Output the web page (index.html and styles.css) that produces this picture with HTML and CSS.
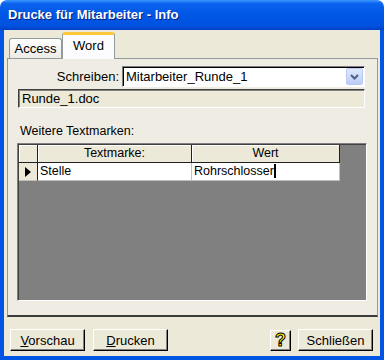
FILE: index.html
```html
<!DOCTYPE html>
<html lang="de">
<head>
    <meta charset="UTF-8">
    <title>Drucke für Mitarbeiter - Info</title>
    <link rel="stylesheet" href="styles.css">
</head>
<body>
    <div class="window">
        <div class="titlebar">Drucke für Mitarbeiter - Info</div>
        <div class="frame">

            <div class="tabs">
                <div class="tab">Access</div>
                <div class="tab active">Word</div>
            </div>

            <div class="pane">
                <div class="field-row">
                    <label class="field-label">Schreiben:</label>
                    <div class="combo">
                        <span class="combo-text">Mitarbeiter_Runde_1</span>
                        <span class="combo-btn">
                            <svg width="9" height="6" viewBox="0 0 9 6">
                                <path d="M1 1 L4.5 4.5 L8 1" fill="none" stroke="#4d6185" stroke-width="2"/>
                            </svg>
                        </span>
                    </div>
                </div>

                <div class="readonly">Runde_1.doc</div>

                <div class="section-label">Weitere Textmarken:</div>

                <div class="grid">
                    <div class="grid-row head">
                        <div class="cell sel"></div>
                        <div class="cell">Textmarke:</div>
                        <div class="cell">Wert</div>
                    </div>
                    <div class="grid-row data">
                        <div class="cell sel"><span class="pointer"></span></div>
                        <div class="cell">Stelle</div>
                        <div class="cell">Rohrschlosser<span class="caret"></span></div>
                    </div>
                </div>
            </div>

            <div class="buttons">
                <button class="btn"><u>V</u>orschau</button>
                <button class="btn"><u>D</u>rucken</button>
                <span class="spacer"></span>
                <button class="btn help"><span class="qmark">?</span></button>
                <button class="btn">Schließen</button>
            </div>

        </div>
    </div>
</body>
</html>
```

FILE: styles.css
```css
body {
    margin: 0;
    background: #fff;
    font-family: "Liberation Sans", Arial, sans-serif;
    font-size: 12.5px;
    color: #000;
}

.window {
    width: 384px;
    height: 360px;
    display: flex;
    flex-direction: column;
}

.titlebar {
    height: 30px;
    line-height: 29px;
    padding-left: 8px;
    border-radius: 7px 7px 0 0;
    background: linear-gradient(to bottom, #3d95ff 0%, #0a62ee 12%, #0058e6 45%, #0052e0 85%, #0040c8 100%);
    color: #fff;
    font-family: "Liberation Sans", Arial, sans-serif;
    font-weight: bold;
    font-size: 13px;
    text-shadow: 1px 1px #0a1e7a;
}

.frame {
    flex: 1;
    background: #ece9d8;
    border: 4px solid #0055e5;
    border-top: 0;
    display: flex;
    flex-direction: column;
}

.tabs {
    display: flex;
    align-items: flex-end;
    height: 27px;
    margin-top: 1px;
    padding-left: 5px;
    position: relative;
    z-index: 1;
}

.tab {
    width: 53px;
    height: 20px;
    box-sizing: border-box;
    border: 1px solid #919b9c;
    border-bottom: 0;
    border-radius: 3px 3px 0 0;
    background: linear-gradient(to bottom, #fff, #ecebe6);
    text-align: center;
    line-height: 19px;
    font-size: 13px;
}

.tab.active {
    height: 27px;
    margin-bottom: -1px;
    border-top: 3px solid #ffc83c;
    background: #fcfcfe;
    line-height: 21px;
}

.pane {
    margin-left: 3px;
    width: 371px;
    height: 259px;
    box-sizing: border-box;
    border: 1px solid #919b9c;
    border-bottom: 2px solid #3c3c3c;
    background: #efede3;
    padding: 7px 0 0 10px;
}

.field-row {
    display: flex;
    align-items: center;
    gap: 3px;
}

.field-label {
    width: 101px;
    text-align: right;
    font-size: 13px;
}

.combo {
    width: 243px;
    height: 21px;
    box-sizing: border-box;
    border: 1px solid;
    border-color: #808080 #fff #fff #808080;
    box-shadow: inset 1px 1px #000;
    background: #fff;
    display: flex;
    align-items: center;
    justify-content: space-between;
    padding: 0 1px 0 3px;
    font-size: 13px;
}

.combo-btn {
    width: 17px;
    height: 17px;
    box-sizing: border-box;
    border: 1px solid #b9cbf3;
    border-radius: 2px;
    background: linear-gradient(to bottom, #dfe8fd, #bccdf8);
    display: flex;
    align-items: center;
    justify-content: center;
}

.readonly {
    width: 347px;
    height: 19px;
    box-sizing: border-box;
    margin-top: 2px;
    border: 1px solid;
    border-color: #404040 #fff #fff #404040;
    box-shadow: inset 1px 1px #808080;
    padding: 1px 0 0 3px;
    font-size: 13px;
    background: #ece9d8;
}

.section-label {
    margin-top: 16px;
    margin-left: 2px;
    height: 19px;
}

.grid {
    margin-left: -1px;
    width: 350px;
    height: 158px;
    box-sizing: border-box;
    border: 1px solid;
    border-color: #808080 #fff #fff #808080;
    box-shadow: inset 1px 1px #404040;
    background: #808080;
    padding: 1px 0 0 1px;
}

.grid-row {
    display: grid;
    grid-template-columns: 19px 154px 148px;
    height: 18px;
}

.grid-row .cell {
    border-right: 1px solid #202020;
    border-bottom: 1px solid #202020;
    line-height: 17px;
    white-space: nowrap;
}

.head .cell {
    background: #ece9d8;
    text-align: center;
    box-shadow: inset 1px 1px #fff;
}

.data .cell {
    background: #fff;
    padding-left: 2px;
    border-color: #c0c0c0;
}

.data .cell.sel {
    background: #ece9d8;
    padding-left: 0;
    border-right-color: #202020;
    border-bottom-color: #c0c0c0;
    display: flex;
    align-items: center;
    justify-content: center;
}

.pointer {
    width: 0;
    height: 0;
    border-top: 5px solid transparent;
    border-bottom: 5px solid transparent;
    border-left: 6px solid #000;
}

.caret {
    display: inline-block;
    width: 2px;
    height: 14px;
    background: #000;
    vertical-align: -3px;
}

.buttons {
    display: flex;
    align-items: center;
    gap: 8px;
    padding: 12px 7px 0 6px;
}

.spacer {
    flex: 1;
}

.btn {
    height: 22px;
    min-width: 75px;
    box-sizing: border-box;
    border: 1px solid;
    border-color: #fff #000 #000 #fff;
    box-shadow: inset -1px -1px #808080;
    background: #ece9d8;
    font-family: "Liberation Sans", Arial, sans-serif;
    font-size: 13px;
    color: #000;
    padding: 0 6px;
}

.btn.help {
    min-width: 21px;
    width: 21px;
    height: 21px;
    padding: 0;
    margin-right: -1px;
}

.qmark {
    font-family: "Liberation Sans", Arial, sans-serif;
    font-weight: bold;
    font-size: 18px;
    line-height: 17px;
    color: #ffff00;
    -webkit-text-stroke: 1px #000;
}
```
